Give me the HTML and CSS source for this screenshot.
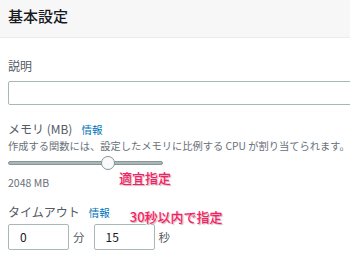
FILE: index.html
```html
<!DOCTYPE html>
<html lang="ja">
<head>
<meta charset="utf-8">
<link rel="stylesheet" href="styles.css">
</head>
<body>
<div class="panel">
  <div class="header"><h2 class="title">基本設定</h2></div>
  <div class="body">
    <div class="field">
      <div class="label">説明</div>
      <div class="input wide"></div>
    </div>
    <div class="field memory">
      <div class="label-row"><span class="label main">メモリ (MB)</span><span class="info">情報</span></div>
      <div class="desc">作成する関数には、設定したメモリに比例する CPU が割り当てられます。</div>
      <div class="slider"><div class="track"></div><div class="thumb"></div></div>
      <div class="value-row"><span class="value">2048 MB</span><span class="note note1">適宜指定</span></div>
    </div>
    <div class="field timeout">
      <div class="label-row"><span class="label main">タイムアウト</span><span class="info">情報</span><span class="note note2">30秒以内で指定</span></div>
      <div class="time-row">
        <div class="input small">0</div><span class="unit">分</span>
        <div class="input small">15</div><span class="unit">秒</span>
      </div>
    </div>
  </div>
</div>
</body>
</html>
```
FILE: styles.css
```css
* { box-sizing: border-box; }
html, body { margin: 0; padding: 0; background: #fff; }
body {
  font-family: "Noto Sans CJK JP", "Noto Sans", sans-serif;
  color: #16191f;
  width: 350px;
  height: 258px;
  overflow: hidden;
}
.header {
  background: #f7f7f7;
  height: 38px;
  border-bottom: 1px solid #eaeded;
  padding: 4px 8px 0;
}
.title {
  margin: 0;
  font-size: 15px;
  font-weight: 500;
  line-height: 24px;
  color: #16191f;
}
.body { padding: 20px 0 0 8px; }
.label {
  font-size: 12px;
  line-height: 16px;
  color: #545b64;
}
.label.main { font-size: 12px; color: #545b64; }
.input {
  border: 1px solid #aab7b8;
  border-radius: 2px;
  background: #fff;
  height: 24px;
  font-size: 12px;
  line-height: 22px;
  padding: 0 8px;
  color: #16191f;
}
.input.wide { margin-top: 7px; width: 360px; }
.memory { margin-top: 16px; }
.label-row { display: flex; align-items: baseline; gap: 9px; height: 17px; }
.info { font-size: 10.5px; color: #0073bb; }
.desc { font-size: 10.25px; color: #687078; line-height: 14px; margin-top: 1px; white-space: nowrap; }
.slider { position: relative; height: 16px; margin-top: 2px; width: 155px; }
.track {
  position: absolute; left: 0; right: 0; top: 6px; height: 4px;
  background: #aab7b8; border-radius: 2px; border: 1px solid #879596;
}
.thumb {
  position: absolute; left: 93px; top: 1px; width: 14px; height: 14px;
  border-radius: 50%; background: #fafafa; border: 1px solid #879596;
}
.value-row { display: flex; align-items: center; height: 18px; }
.value { font-size: 10.5px; color: #687078; width: 111px; margin-top: 4px; }
.note {
  color: #ff1a66;
  font-size: 13px;
  font-weight: 500;
  text-shadow: 1px 1px 1px #bbb, -1px -1px 0 #fff, 1px -1px 0 #fff, -1px 1px 0 #fff;
}
.note1 { position: relative; top: -3px; }
.timeout { margin-top: 13px; }
.note2 { position: relative; left: 11px; top: 5px; }
.time-row { display: flex; align-items: center; margin-top: 5px; }
.input.small { width: 61px; height: 26px; line-height: 24px; font-size: 12px; padding-left: 11px; }
.unit { font-size: 11.5px; color: #545b64; margin: 0 9px 0 4px; }
```
